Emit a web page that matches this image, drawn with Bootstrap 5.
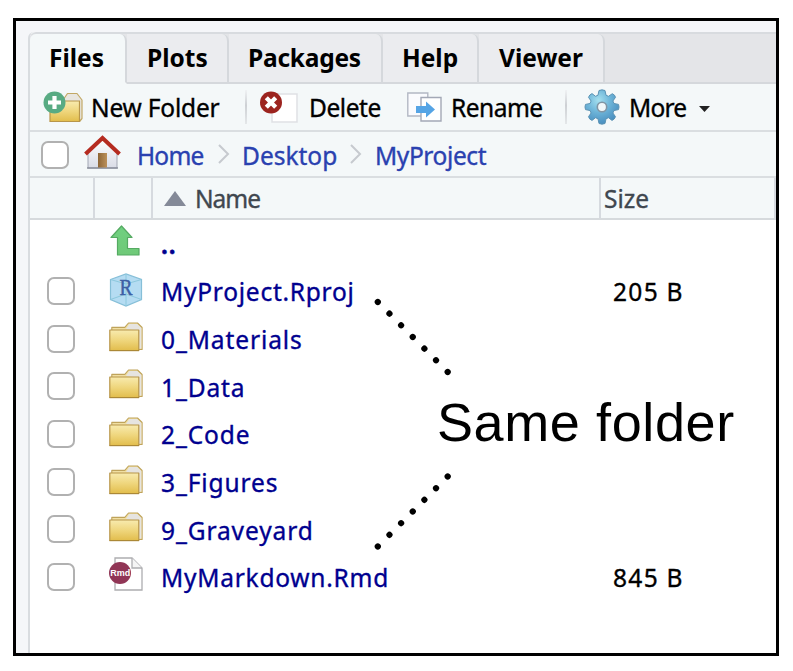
<!DOCTYPE html>
<html lang="en">
<head>
<meta charset="utf-8">
<title>Files</title>
<link href="https://cdn.jsdelivr.net/npm/bootstrap@5.3.0/dist/css/bootstrap.min.css" rel="stylesheet">
<style>
body{background:#fff;font-family:"Noto Sans","Open Sans",sans-serif;font-size:24.5px;line-height:1;color:#000}
.app-frame{width:766px;height:638px;margin:18px 0 0 13px;border:3px solid #000;background:#f5f6f9;padding:11px 0 0 12px}
.pane{border-left:2px solid #d9dce0;background:#fff}
.pane,.tabstrip{border-top-left-radius:6px}
.tabstrip{height:52px;background:#e4e5e8;border-top:2px solid #d8dbdf}
.pane-tab{border-right:2px solid #d5d8dc;border-bottom:2px solid #d5d8dc;background:#ebecef;font-weight:700;border-top-right-radius:7px;height:50px;padding-top:12px}
.pane-tab.current{background:#f4f8f9;border-bottom-color:#f4f8f9;border-top-left-radius:6px}
.tab-rest{border-bottom:2px solid #d5d8dc}
.t1{width:97px;padding-left:19px}.t2{width:102px;padding-left:20px}.t3{width:154px;padding-left:19px;letter-spacing:-.25px}.t4{width:96px;padding-left:19px}.t5{width:126px;padding-left:20px}
.tools{height:48px;background:#f4f8f9;border-bottom:2px solid #dadee1}
.crumbs{height:46px;background:#f4f8f9;border-bottom:2px solid #dadee1;color:#2a41b0}
.heads{height:42px;background:#f4f8f9;border-bottom:2px solid #d6dadd;color:#40474f}
.heads>div{height:40px;border-right:2px solid #d6dadf}
.vline{width:2px;height:34px;background:linear-gradient(#f0f2f4,#cdd0d4 45%,#e4e7e9)}
.tick.form-check-input{width:28px;height:28px;border:2px solid #b1b1b1;border-radius:7px;background:#fff;margin:-1px 0 0;box-shadow:none}
.file-row{height:47.7px;color:#00008f}
.c-check{width:63px;padding-left:17px}
.c-icon{width:68px;padding-left:16px}
.c-size{color:#000;padding-left:13px;letter-spacing:1.3px}
.c-name{width:439px;letter-spacing:.9px}
svg{display:block;flex:none;overflow:visible}
.lbl{white-space:nowrap;display:block}
.tools .lbl,.crumbs .lbl,.heads .lbl,.file-row .lbl{-webkit-text-stroke:.35px currentColor}
.tools .lbl{padding-top:3px}.crumbs .lbl{padding-top:4px}.heads .lbl,.file-row .lbl{padding-top:2px}
.i-new{margin-left:13px}
.w-new{margin-left:7px;width:154px;letter-spacing:-.2px}
.i-del{margin-left:13px}.w-del{margin-left:11px;width:98px;letter-spacing:-.45px}
.w-ren{margin-left:9px;width:114px;letter-spacing:-.5px}
.i-gear{margin-left:18px}.w-more{margin-left:10px;width:70px;letter-spacing:-.8px}
.caret-icon{margin-top:4px}
.tick.c-all{margin:1px 0 0 11px}.i-home{margin-left:15px;margin-top:-4px}
.w-home{margin-left:16px;width:81px;letter-spacing:-.8px}.w-desk{margin-left:13px;width:108px}.w-proj{margin-left:14px;letter-spacing:-.4px}
.h-a{width:65px}.h-b{width:58px}.h-c{width:448px;padding-left:11px}.h-d{width:175px;padding-left:3px}
.w-name{margin-left:9px;letter-spacing:-1px}
.i-up{margin-left:1px;margin-top:-7px}
.i-fold{margin-top:-5px}.i-cube{margin-top:-4px}.i-rmd{margin-top:-7px}
.f1,.f7{letter-spacing:.75px}
.note{left:437px;top:395px;font:54px/1 "Liberation Sans",Arial,sans-serif;letter-spacing:.6px;white-space:nowrap}
.dots{left:0;top:0;pointer-events:none}
</style>
<script src="https://cdn.jsdelivr.net/npm/bootstrap@5.3.0/dist/js/bootstrap.bundle.min.js"></script>
</head>
<body class="position-relative overflow-hidden">
<svg width="0" height="0" class="position-absolute">
<defs>
<linearGradient id="gold" x1="0" y1="0" x2="0" y2="1"><stop offset="0" stop-color="#f8ebaf"/><stop offset=".5" stop-color="#efd67d"/><stop offset="1" stop-color="#e2bd4c"/></linearGradient>
<linearGradient id="grn" x1="0" y1="0" x2="0" y2="1"><stop offset="0" stop-color="#70d080"/><stop offset="1" stop-color="#6fc978"/></linearGradient>
<radialGradient id="gearfill" cx=".4" cy=".3" r=".7"><stop offset="0" stop-color="#a5e0ef"/><stop offset=".5" stop-color="#6db4d8"/><stop offset="1" stop-color="#4a8fc0"/></radialGradient>
<linearGradient id="wall" x1="0" y1="0" x2="0" y2="1"><stop offset="0" stop-color="#fff"/><stop offset="1" stop-color="#d9dce6"/></linearGradient>
<linearGradient id="door" x1="0" y1="0" x2="1" y2="0"><stop offset="0" stop-color="#8d6536"/><stop offset="1" stop-color="#bb905a"/></linearGradient>
<symbol id="folder" viewBox="0 0 35 30"><path d="M2.800 9V5.400h13L19.500 1h9l4.600 4.500V27.500H29" fill="#f0dfa2" stroke="#bfa35b" stroke-width="1.100" stroke-linejoin="round"/><path d="M17 7l3.300-5h7.900l4.200 4v20.500H29.500V8.500z" fill="#e6e4e0"/><path d="M.8 8h29v20.500H.8z" fill="url(#gold)" stroke="#b8964a" stroke-width="1.200" stroke-linejoin="round"/><path d="M.5 28.700h29.500" stroke="#a88532" stroke-width="1"/></symbol>
</defs>
</svg>
<main class="app-frame overflow-hidden">
<section class="pane h-100">
  <nav class="tabstrip d-flex">
    <div class="pane-tab current t1"><span class="lbl">Files</span></div>
    <div class="pane-tab t2"><span class="lbl">Plots</span></div>
    <div class="pane-tab t3"><span class="lbl">Packages</span></div>
    <div class="pane-tab t4"><span class="lbl">Help</span></div>
    <div class="pane-tab t5"><span class="lbl">Viewer</span></div>
    <div class="tab-rest flex-grow-1"></div>
  </nav>
  <div class="tools d-flex align-items-center">
    <svg class="i-new" width="41" height="32" viewBox="0 0 41 32"><path d="M20 9l4.500-6.500h9.500l5 6.500v18.500l-2.500 3H22z" fill="#e8e6e0" stroke="#c2a865" stroke-width="1.200" stroke-linejoin="round"/><path d="M7 10h29.500v20.500H7z" fill="url(#gold)" stroke="#b8964a" stroke-width="1.200"/><circle cx="11.500" cy="11.500" r="11" fill="#58ab83"/><path d="M11.500 5v13M5 11.500h13" stroke="#fff" stroke-width="4.200"/></svg>
    <span class="lbl w-new">New Folder</span>
    <i class="vline"></i>
    <svg class="i-del" width="38" height="32" viewBox="0 0 38 32"><path d="M12 3h25v28H12z" fill="#fff" stroke="#dfe1e5" stroke-width="1.500"/><circle cx="11" cy="11.500" r="11" fill="#9c241f"/><path d="M6.300 6.800l9.400 9.400M15.700 6.800l-9.400 9.400" stroke="#fff" stroke-width="4.400"/></svg>
    <span class="lbl w-del">Delete</span>
    <svg class="i-ren" width="35" height="30" viewBox="0 0 35 30"><path d="M.8 1h20v23H.8z" fill="#fafbfe" stroke="#b3b8c4" stroke-width="1.400"/><path d="M14 5.500h20V29H14z" fill="#fff" stroke="#a3a8b6" stroke-width="1.400"/><path d="M9 14h10V9.500l9 8-9 8V21H9z" fill="#55a4e5"/></svg>
    <span class="lbl w-ren">Rename</span>
    <i class="vline"></i>
    <svg class="i-gear" width="34" height="36" viewBox="-17 -18 34 36"><path fill="url(#gearfill)" stroke="#5b93b4" stroke-width="1" stroke-linejoin="round" d="M-3-16.500Q0-17.800 3-16.500L4-11.800 6.500-10.700 10.300-13.300Q13-12.300 13.500-9.700L10.900-6 12-3.500 16.500-2.600Q17.500 0 16.500 2.600L12 3.500 10.900 6 13.500 9.700Q12.500 12.600 10 13.400L6.500 10.700 4 11.800 3 16.500Q0 17.800-3 16.500L-4 11.800-6.500 10.700-10 13.400Q-12.700 12.600-13.500 9.700L-10.900 6-12 3.500-16.500 2.600Q-17.500 0-16.500-2.600L-12-3.500-10.900-6-13.500-9.700Q-12.500-12.500-10-13.400L-6.500-10.700-4-11.800Z"/><circle r="4.700" fill="#f1f7f9" stroke="#8195a4" stroke-width="1.600"/></svg>
    <span class="lbl w-more">More</span>
    <svg width="11" height="6" class="caret-icon" viewBox="0 0 11 6"><path d="M0 0h11L5.500 6z" fill="#222"/></svg>
  </div>
  <div class="crumbs d-flex align-items-center">
    <input type="checkbox" class="form-check-input tick c-all" aria-label="Select all">
    <svg class="i-home" width="37" height="34" viewBox="0 0 37 34"><path d="M4 16L18.500 3 33 16v17H4z" fill="url(#wall)" stroke="#a2a7b4" stroke-width="1"/><path d="M3 33h31" stroke="#878b99" stroke-width="1.400"/><path d="M14 18h9v14.500h-9z" fill="url(#door)"/><path d="M1.500 19L18.500 3l17 16" fill="none" stroke="#b52b20" stroke-width="4"/></svg>
    <span class="lbl w-home">Home</span>
    <svg width="11" height="20" viewBox="0 0 11 20"><path d="M1 1l9 9-9 9" fill="none" stroke="#c6cacf" stroke-width="2"/></svg>
    <span class="lbl w-desk">Desktop</span>
    <svg width="11" height="20" viewBox="0 0 11 20"><path d="M1 1l9 9-9 9" fill="none" stroke="#c6cacf" stroke-width="2"/></svg>
    <span class="lbl w-proj">MyProject</span>
  </div>
  <div class="heads d-flex">
    <div class="h-a"></div><div class="h-b"></div>
    <div class="h-c d-flex align-items-center"><svg width="22" height="15" viewBox="0 0 22 15"><path d="M11 0l11 15H0z" fill="#848a98"/></svg><span class="lbl w-name">Name</span></div>
    <div class="h-d d-flex align-items-center"><span class="lbl">Size</span></div>
  </div>
  <div class="listing">
    <div class="file-row d-flex align-items-center"><div class="c-check"></div><div class="c-icon"><svg class="i-up" width="30" height="31" viewBox="0 0 30 31"><path d="M11.500 1L22 12.500h-4.500v11H29V30H7.500V12.500H1z" fill="url(#grn)" stroke="#55aa62" stroke-width="1.200" stroke-linejoin="round"/></svg></div><div class="c-name"><span class="lbl fw-bold">..</span></div></div>
    <div class="file-row d-flex align-items-center"><div class="c-check"><input type="checkbox" class="form-check-input tick d-block" aria-label="Select"></div><div class="c-icon"><svg class="i-cube" width="34" height="34" viewBox="0 0 34 34"><path d="M1.500 6.500L17 1l15.500 5.500v20L17 33 1.500 26.500z" fill="#b5dcf2" stroke="#86bfd8" stroke-width="1.200"/><path d="M1.500 6.500L17 11l15.500-4.500M17 1v32M1.500 26.500L17 21l15.500 5.500" fill="none" stroke="#8cc8dd" stroke-width="1"/><text x="17" y="21.500" text-anchor="middle" font-family="Liberation Serif,serif" font-size="23" textLength="13" lengthAdjust="spacingAndGlyphs" fill="#3d5fa5" stroke="#3d5fa5" stroke-width=".5">R</text></svg></div><div class="c-name"><span class="lbl f1">MyProject.Rproj</span></div><div class="c-size"><span class="lbl">205 B</span></div></div>
    <div class="file-row d-flex align-items-center"><div class="c-check"><input type="checkbox" class="form-check-input tick d-block" aria-label="Select"></div><div class="c-icon"><svg class="i-fold" width="35" height="30"><use href="#folder"/></svg></div><div class="c-name"><span class="lbl">0_Materials</span></div></div>
    <div class="file-row d-flex align-items-center"><div class="c-check"><input type="checkbox" class="form-check-input tick d-block" aria-label="Select"></div><div class="c-icon"><svg class="i-fold" width="35" height="30"><use href="#folder"/></svg></div><div class="c-name"><span class="lbl">1_Data</span></div></div>
    <div class="file-row d-flex align-items-center"><div class="c-check"><input type="checkbox" class="form-check-input tick d-block" aria-label="Select"></div><div class="c-icon"><svg class="i-fold" width="35" height="30"><use href="#folder"/></svg></div><div class="c-name"><span class="lbl">2_Code</span></div></div>
    <div class="file-row d-flex align-items-center"><div class="c-check"><input type="checkbox" class="form-check-input tick d-block" aria-label="Select"></div><div class="c-icon"><svg class="i-fold" width="35" height="30"><use href="#folder"/></svg></div><div class="c-name"><span class="lbl">3_Figures</span></div></div>
    <div class="file-row d-flex align-items-center"><div class="c-check"><input type="checkbox" class="form-check-input tick d-block" aria-label="Select"></div><div class="c-icon"><svg class="i-fold" width="35" height="30"><use href="#folder"/></svg></div><div class="c-name"><span class="lbl">9_Graveyard</span></div></div>
    <div class="file-row d-flex align-items-center"><div class="c-check"><input type="checkbox" class="form-check-input tick d-block" aria-label="Select"></div><div class="c-icon"><svg class="i-rmd" width="34" height="34" viewBox="0 0 34 34"><path d="M6 1h17l10 10v22H6z" fill="#fff" stroke="#adadb0" stroke-width="1.300"/><path d="M23 1v10h10" fill="#f5f5f5" stroke="#adadb0" stroke-width="1.300"/><circle cx="11" cy="16" r="11" fill="#913656"/><text x="11.300" y="19" text-anchor="middle" font-family="Liberation Sans,sans-serif" font-weight="700" font-size="9" fill="#fff">Rmd</text></svg></div><div class="c-name"><span class="lbl f7">MyMarkdown.Rmd</span></div><div class="c-size"><span class="lbl">845 B</span></div></div>
  </div>
</section>
</main>
<div class="note position-absolute">Same folder</div>
<svg class="dots position-absolute" width="793" height="671"><path d="M377.800 302l69.900 70M377.800 546.500l69.900-70" fill="none" stroke="#000" stroke-width="6.200" stroke-linecap="round" stroke-dasharray="0.01 16.470"/></svg>
</body>
</html>
